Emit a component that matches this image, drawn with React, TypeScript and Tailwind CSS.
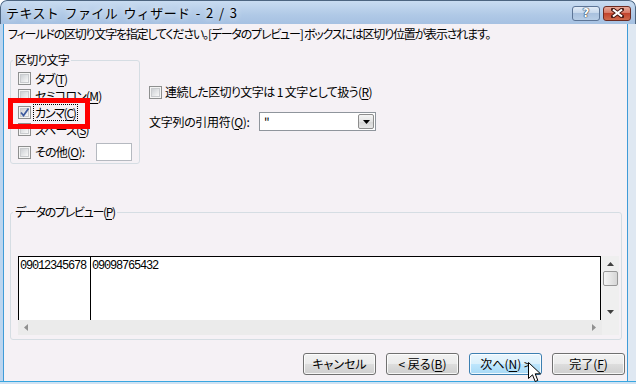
import React from "react";

const jp = "font-['Noto_Sans_CJK_JP','Noto_Sans',sans-serif] [font-feature-settings:'palt']";

const U: React.FC<{ c: string }> = ({ c }) => (
  <span className="underline decoration-1 underline-offset-[2px]">{c}</span>
);

const CheckBox: React.FC<{ checked?: boolean }> = ({ checked }) => (
  <span className="flex h-[13px] w-[13px] shrink-0 items-center justify-center border border-[#8e8f8f] bg-[#f4f4f4]">
    <span className="relative h-[9px] w-[9px] border border-[#c9cbce] bg-[linear-gradient(135deg,#cdd0d4,#f8f8f8)]">
      {checked && (
        <svg className="absolute -left-[2px] -top-[2px]" width="11" height="11" viewBox="0 0 11 11">
          <path d="M2 5.5 L4.5 8.5 L9.5 1.5" fill="none" stroke="#3d5a9e" strokeWidth="1.7" />
        </svg>
      )}
    </span>
  </span>
);

const Button: React.FC<{ hover?: boolean; children: React.ReactNode }> = ({ hover, children }) => (
  <div
    className={`flex h-[22px] w-[73px] items-center justify-center rounded-[3px] border text-[12px] leading-none text-black shadow-[inset_0_0_0_1px_rgba(255,255,255,0.8)] ${
      hover
        ? "border-[#3c7fb1] bg-[linear-gradient(#eaf6fd_0%,#d9f0fc_50%,#bee6fd_50%,#a7d9f5_100%)]"
        : "border-[#707070] bg-[linear-gradient(#f2f2f2_0%,#ebebeb_50%,#dddddd_50%,#cfcfcf_100%)]"
    }`}
  >
    {children}
  </div>
);

export default function App() {
  return (
    <div className={`relative flex h-[384px] w-[636px] flex-col overflow-hidden rounded-t-[7px] bg-[#b8d0ea] ${jp}`}>
      {/* title bar */}
      <div className="flex h-[24px] shrink-0 items-center justify-between rounded-t-[7px] border border-b-0 border-[#4d6580] bg-[linear-gradient(#c9dcf1,#b0c9e6_60%,#a6c1e2)] pl-[5px] pr-[4px]">
        <span className="text-[13px] leading-none tracking-[0.4px] text-black [font-feature-settings:normal] [text-shadow:0_0_6px_#ffffff] [word-spacing:2px]">
          テキスト ファイル ウィザード - 2 / 3
        </span>
        <div className="flex gap-[3px] pt-[1px]">
          <div className="flex h-[15px] w-[28px] items-center justify-center rounded-[3px] border border-[#5d7596] bg-[linear-gradient(#e2ecf7,#c3d5ea_50%,#a9c1de_50%,#b7cde6)]">
            <span className="font-['DejaVu_Sans',sans-serif] text-[12px] font-bold leading-none text-white [text-shadow:0_0_1px_#1f2f45,0_0_1px_#1f2f45,0_0_1px_#1f2f45]">?</span>
          </div>
          <div className="flex h-[15px] w-[28px] items-center justify-center rounded-[3px] border border-[#6d2b22] bg-[linear-gradient(#e8ab9c,#d5735f_50%,#c2432d_50%,#cf6a4c)]">
            <svg width="13" height="10" viewBox="0 0 13 10">
              <path d="M2 1.5 L11 8.5 M11 1.5 L2 8.5" stroke="#4a1a14" strokeWidth="4" strokeLinecap="square" />
              <path d="M2 1.5 L11 8.5 M11 1.5 L2 8.5" stroke="#ffffff" strokeWidth="2.2" />
            </svg>
          </div>
        </div>
      </div>

      <div className="flex h-[357px] shrink-0">
        {/* left frame */}
        <div className="w-[4px] border-r border-[#3f9bd8] bg-[#bcd5ef]" />
        {/* client */}
        <div className="flex w-[623px] flex-col bg-[#f5f1f5] pt-[2px] text-[12px] leading-[16px] tracking-[-0.8px] text-black">
          <div className="h-[16px] whitespace-nowrap pl-[4px] tracking-[-1.2px]">
            フィールドの区切り文字を指定してください。[データのプレビュー] ボックスには区切り位置が表示されます。
          </div>

          <div className="mt-[10px] flex pl-[6px]">
            <fieldset className="h-[112px] w-[130px] rounded-[3px] border border-[#d5dde3] pl-[7px]">
              <legend className="-ml-[5px] px-[2px] leading-[16px]">区切り文字</legend>
              <div className="flex flex-col pt-[2px]">
                <div className="flex h-[17px] items-center gap-[4px]">
                  <CheckBox />
                  <span>タブ(<U c="T" />)</span>
                </div>
                <div className="flex h-[17px] items-center gap-[4px]">
                  <CheckBox />
                  <span>セミコロン(<U c="M" />)</span>
                </div>
                <div className="flex h-[17px] items-center gap-[2px]">
                  <CheckBox checked />
                  <span className="border border-dotted border-black px-[1px] leading-[15px] tracking-[-1.3px]">
                    カンマ(<U c="C" />)
                  </span>
                </div>
                <div className="flex h-[17px] items-center gap-[4px]">
                  <CheckBox />
                  <span>スペース(<U c="S" />)</span>
                </div>
                <div className="mt-[5px] flex h-[18px] items-center gap-[4px]">
                  <CheckBox />
                  <span className="w-[57px]">その他(<U c="O" />):</span>
                  <div className="h-[18px] w-[36px] border border-[#b5b9c0] bg-white" />
                </div>
              </div>
            </fieldset>

            <div className="ml-[9px] flex flex-col">
              <div className="mt-[32px] flex h-[16px] items-center gap-[3px]">
                <CheckBox />
                <span className="tracking-[-0.6px]">連続した区切り文字は 1 文字として扱う(<U c="R" />)</span>
              </div>
              <div className="mt-[12px] flex h-[19px] items-center">
                <span className="w-[110px] tracking-[-0.3px]">文字列の引用符(<U c="Q" />):</span>
                <div className="flex h-[19px] w-[117px] items-center border border-[#8f959c] bg-white pr-[1px]">
                  <span className="flex-1 pl-[4px] leading-[14px]">"</span>
                  <div className="flex h-[15px] w-[16px] items-center justify-center rounded-[2px] border border-[#8d8d8d] bg-[linear-gradient(#f5f5f5,#e3e3e3_50%,#d5d5d5_50%,#e6e6e6)]">
                    <svg width="7" height="4" viewBox="0 0 7 4">
                      <path d="M0 0 H7 L3.5 4 Z" fill="#000" />
                    </svg>
                  </div>
                </div>
              </div>
            </div>
          </div>

          <fieldset className="ml-[6px] mt-[40px] h-[136px] w-[611px] rounded-[3px] border border-[#d5dde3] pb-[3px] pl-[7px] pr-[2px]">
            <legend className="-ml-[5px] px-[2px] leading-[16px] tracking-[-1.3px]">データのプレビュー(<U c="P" />)</legend>
            <div className="mt-[36px] flex w-[601px] flex-col">
              <div className="flex h-[64px]">
                <div className="flex w-[583px] border-l border-r border-t border-black bg-white font-['Liberation_Mono',monospace] text-[12px] leading-[14px] tracking-[-1.2px] [font-feature-settings:normal]">
                  <div className="w-[72px] border-r border-black pl-[1px] pt-[2px]">09012345678</div>
                  <div className="pl-[1px] pt-[2px]">09098765432</div>
                </div>
                <div className="w-[1px] bg-[#f3f3f3]" />
                <div className="flex w-[17px] flex-col items-center bg-[#efefef] py-[6px]">
                  <svg width="7" height="4" viewBox="0 0 7 4">
                    <path d="M0 4 H7 L3.5 0 Z" fill="#404040" />
                  </svg>
                  <div className="mt-[5px] h-[15px] w-[15px] rounded-[2px] border border-[#979797] bg-[linear-gradient(90deg,#f4f4f4,#e6e6e6_50%,#d6d6d6)]" />
                  <div className="flex-1" />
                  <svg width="7" height="4" viewBox="0 0 7 4">
                    <path d="M0 0 H7 L3.5 4 Z" fill="#404040" />
                  </svg>
                </div>
              </div>
              <div className="flex h-[15px]">
                <div className="flex w-[584px] items-center justify-between bg-[#ebebeb] px-[6px]">
                  <svg width="4" height="7" viewBox="0 0 4 7">
                    <path d="M4 0 V7 L0 3.5 Z" fill="#909090" />
                  </svg>
                  <svg width="4" height="7" viewBox="0 0 4 7">
                    <path d="M0 0 V7 L4 3.5 Z" fill="#909090" />
                  </svg>
                </div>
                <div className="w-[17px] bg-[#efefef]" />
              </div>
            </div>
          </fieldset>

          <div className="mt-[13px] flex justify-end gap-[10px] pr-[2px] tracking-normal">
            <Button>キャンセル</Button>
            <Button>&lt; 戻る(<U c="B" />)</Button>
            <Button hover>次へ(<U c="N" />) &gt;</Button>
            <Button>完了(<U c="F" />)</Button>
          </div>
        </div>
        {/* right frame */}
        <div className="w-[9px] border-l border-[#3f9bd8] bg-[#dfe8f2]" />
      </div>
      <div className="h-[3px] border-t border-[#38a6e0] bg-[#cfe2f3]" />

      {/* highlight marker */}
      <div className="absolute left-[8px] top-[98px] h-[31px] w-[82px] border-[5px] border-[#ff0000]" />

      {/* mouse cursor */}
      <svg className="absolute left-[528px] top-[362px]" width="14" height="22" viewBox="0 0 14 22">
        <path d="M0.5 0.5 L0.5 16.5 L4.5 12.8 L7.2 19.5 L9.8 18.4 L7.2 11.8 L12.5 11.8 Z" fill="#ffffff" stroke="#000000" strokeWidth="1" strokeLinejoin="miter" />
      </svg>
    </div>
  );
}
